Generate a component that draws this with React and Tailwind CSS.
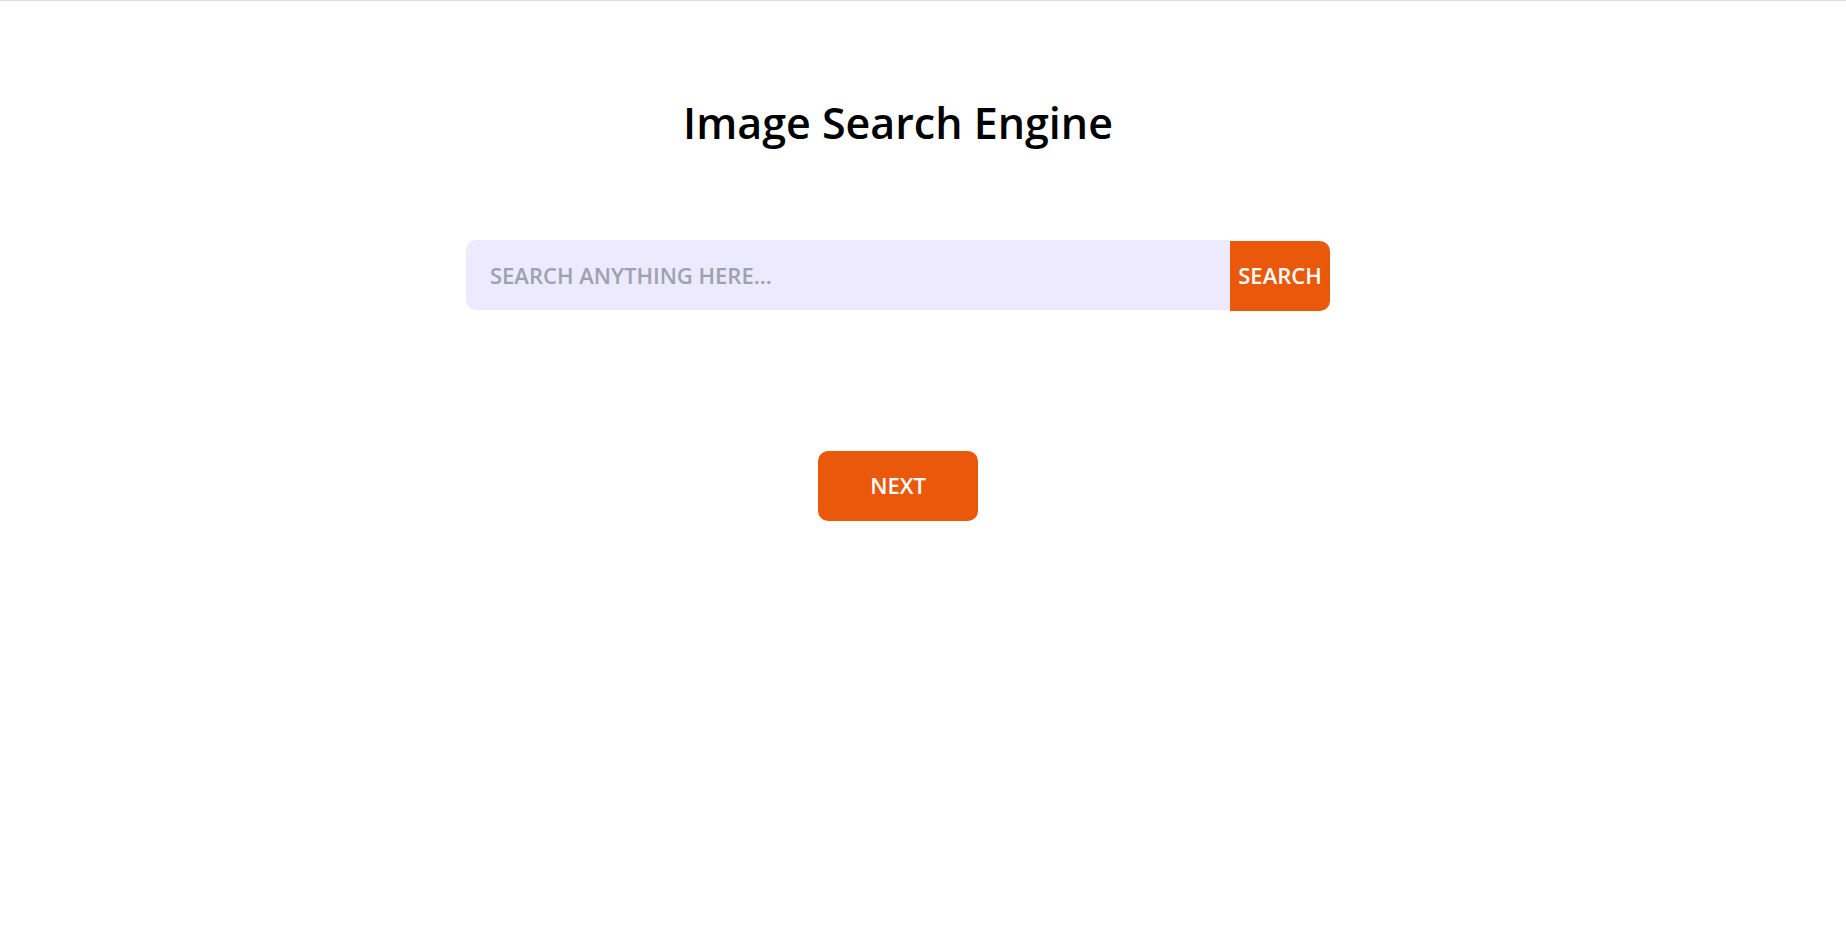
export default function App() {
  return (
    <div className="min-h-screen border-t border-[#e0e0e0] bg-white pr-[50px] font-['Open_Sans','Noto_Sans',sans-serif] font-semibold">
      <main className="flex flex-col items-center pt-20">
        <h1 className="text-[43px] leading-[84px] text-black">Image Search Engine</h1>
        <form className="mt-[75px] flex w-full max-w-[864px] items-baseline" onSubmit={(e) => e.preventDefault()}>
          <input
            type="text"
            aria-label="Search images"
            placeholder="SEARCH ANYTHING HERE..."
            className="h-[70px] min-w-0 flex-1 rounded-l-[10px] bg-[#ede9fe] px-6 text-[22px] text-gray-800 outline-none placeholder:text-[#9ca3af]"
          />
          <button type="submit" className="h-[70px] w-[100px] rounded-r-[10px] bg-[#ea580c] text-[22px] text-white">
            SEARCH
          </button>
        </form>
        <button type="button" className="mt-[140px] h-[70px] w-40 rounded-[10px] bg-[#ea580c] text-[22px] text-white">
          NEXT
        </button>
      </main>
    </div>
  );
}
